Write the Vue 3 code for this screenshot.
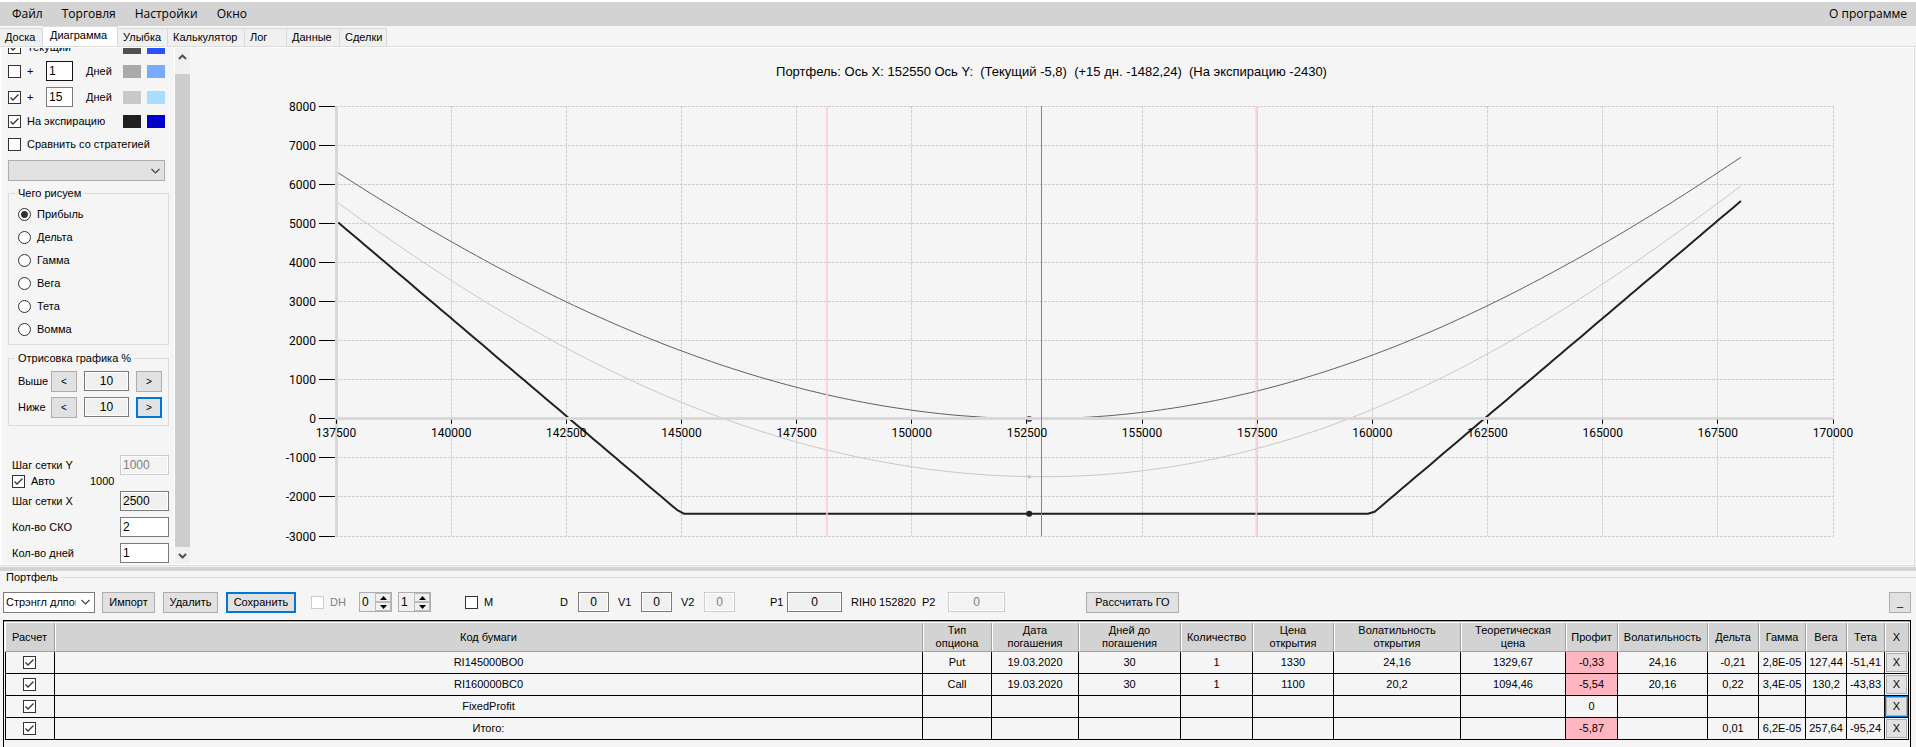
<script setup>
import { computed, onBeforeUnmount, onMounted, ref } from 'vue'

const menu = ['Файл', 'Торговля', 'Настройки', 'Окно']
const tabs = [
  { name: 'Доска', w: 43 },
  { name: 'Диаграмма', w: 75, active: true },
  { name: 'Улыбка', w: 50 },
  { name: 'Калькулятор', w: 77 },
  { name: 'Лог', w: 42 },
  { name: 'Данные', w: 53 },
  { name: 'Сделки', w: 47 }
]
const metrics = ['Прибыль', 'Дельта', 'Гамма', 'Вега', 'Тета', 'Вомма']
const metric = ref('Прибыль')

const columns = [
  { t: 'Расчет', w: 50 },
  { t: 'Код бумаги' },
  { t: 'Тип опциона', w: 69 },
  { t: 'Дата погашения', w: 87 },
  { t: 'Дней до погашения', w: 102 },
  { t: 'Количество', w: 72 },
  { t: 'Цена открытия', w: 81 },
  { t: 'Волатильность открытия', w: 127 },
  { t: 'Теоретическая цена', w: 105 },
  { t: 'Профит', w: 52 },
  { t: 'Волатильность', w: 90 },
  { t: 'Дельта', w: 51 },
  { t: 'Гамма', w: 47 },
  { t: 'Вега', w: 41 },
  { t: 'Тета', w: 38 },
  { t: 'X', w: 24 }
]
const rows = [
  ['RI145000BO0', 'Put', '19.03.2020', '30', '1', '1330', '24,16', '1329,67', '-0,33', '24,16', '-0,21', '2,8E-05', '127,44', '-51,41'],
  ['RI160000BC0', 'Call', '19.03.2020', '30', '1', '1100', '20,2', '1094,46', '-5,54', '20,16', '0,22', '3,4E-05', '130,2', '-43,83'],
  ['FixedProfit', '', '', '', '', '', '', '', '0', '', '', '', '', ''],
  ['Итого:', '', '', '', '', '', '', '', '-5,87', '', '0,01', '6,2E-05', '257,64', '-95,24']
]

/* Chart geometry follows the size of its container */
const holder = ref(null)
const size = ref({ w: 1720, h: 500 })
let observer
function measure() {
  size.value = { w: holder.value.clientWidth, h: holder.value.clientHeight }
}
onMounted(() => {
  measure()
  observer = new ResizeObserver(measure)
  observer.observe(holder.value)
})
onBeforeUnmount(() => observer.disconnect())

const X0 = 137500, X1 = 170000, Y0 = -3000, Y1 = 8000
const plot = computed(() => ({ l: 146, r: size.value.w - 80, t: 58, b: size.value.h - 28 }))
const px = v => plot.value.l + ((v - X0) / (X1 - X0)) * (plot.value.r - plot.value.l)
const py = v => plot.value.b - ((v - Y0) / (Y1 - Y0)) * (plot.value.b - plot.value.t)
const snap = v => Math.floor(v) + 0.5
const xTicks = Array.from({ length: 14 }, (_, i) => X0 + i * 2500)
const yTicks = Array.from({ length: 12 }, (_, i) => Y0 + i * 1000)

/* Strangle value by Black-Scholes: long put 145000 and long call 160000 */
function cdf(x) {
  const t = 1 / (1 + 0.2316419 * Math.abs(x))
  const d = 0.3989423 * Math.exp((-x * x) / 2)
  const p = d * t * (0.3193815 + t * (-0.3565638 + t * (1.781478 + t * (-1.821256 + t * 1.330274))))
  return x > 0 ? 1 - p : p
}
function option(s, k, vol, days, call) {
  if (days === 0) return Math.max(call ? s - k : k - s, 0)
  const sd = vol * Math.sqrt(days / 365)
  const d1 = Math.log(s / k) / sd + sd / 2
  const c = s * cdf(d1) - k * cdf(d1 - sd)
  return call ? c : c - s + k
}
const profit = (s, days) => option(s, 145000, 0.2416, days, false) + option(s, 160000, 0.2016, days, true) - 2430
function curve(days) {
  const pts = []
  for (let s = 137550; s <= 168000; s += 150) pts.push(`${px(s).toFixed(1)},${py(profit(s, days)).toFixed(1)}`)
  return pts.join(' ')
}
const now = computed(() => curve(30))
const later = computed(() => curve(15))
const expiry = computed(() => curve(0))
</script>

<template>
  <div class="app">
    <nav class="menu">
      <button v-for="m in menu" :key="m" type="button">{{ m }}</button>
      <button type="button" class="about">О программе</button>
    </nav>

    <div class="tabs" role="tablist">
      <button v-for="t in tabs" :key="t.name" type="button" role="tab" :aria-selected="!!t.active" :class="{ active: t.active }" :style="{ width: t.w + 'px' }">{{ t.name }}</button>
    </div>

    <main class="page">
      <aside class="side">
        <div class="series">
          <input id="s-now" type="checkbox" checked><label for="s-now" class="wide">Текущий</label>
          <button type="button" class="sw c1" aria-label="Цвет"></button><button type="button" class="sw c2" aria-label="Цвет"></button>
        </div>
        <div class="series tall">
          <input id="s-1" type="checkbox"><label for="s-1">+</label>
          <input id="d-1" type="text" value="1" class="field dark"><label for="d-1">Дней</label>
          <button type="button" class="sw c3" aria-label="Цвет"></button><button type="button" class="sw c4" aria-label="Цвет"></button>
        </div>
        <div class="series tall">
          <input id="s-15" type="checkbox" checked><label for="s-15">+</label>
          <input id="d-15" type="text" value="15" class="field"><label for="d-15">Дней</label>
          <button type="button" class="sw c5" aria-label="Цвет"></button><button type="button" class="sw c6" aria-label="Цвет"></button>
        </div>
        <div class="series">
          <input id="s-exp" type="checkbox" checked><label for="s-exp" class="wide">На экспирацию</label>
          <button type="button" class="sw c7" aria-label="Цвет"></button><button type="button" class="sw c8" aria-label="Цвет"></button>
        </div>
        <div class="series">
          <input id="s-cmp" type="checkbox"><label for="s-cmp" class="full">Сравнить со стратегией</label>
        </div>
        <select class="strategy" aria-label="Стратегия"><option></option></select>

        <fieldset class="group kinds">
          <legend>Чего рисуем</legend>
          <label v-for="m in metrics" :key="m"><input v-model="metric" type="radio" name="metric" :value="m">{{ m }}</label>
        </fieldset>

        <fieldset class="group range">
          <legend>Отрисовка графика %</legend>
          <div><label for="up">Выше</label><button type="button" class="btn">&lt;</button><input id="up" type="text" value="10" class="field flat mid"><button type="button" class="btn">&gt;</button></div>
          <div><label for="dn">Ниже</label><button type="button" class="btn">&lt;</button><input id="dn" type="text" value="10" class="field flat mid"><button type="button" class="btn focus">&gt;</button></div>
        </fieldset>

        <div class="steps">
          <label for="gy">Шаг сетки Y</label><input id="gy" type="text" value="1000" class="field flat" disabled>
          <div class="auto"><input id="auto" type="checkbox" checked><label for="auto">Авто</label><span>1000</span></div>
          <label for="gx">Шаг сетки X</label><input id="gx" type="text" value="2500" class="field flat">
          <label for="sko">Кол-во СКО</label><input id="sko" type="text" value="2" class="field">
          <label for="days">Кол-во дней</label><input id="days" type="text" value="1" class="field">
        </div>
      </aside>
      <div class="scroll">
        <button type="button" aria-label="Вверх"><svg width="9" height="6" viewBox="0 0 9 6"><path d="M1 5 4.500 1.500 8 5" /></svg></button>
        <i></i>
        <button type="button" aria-label="Вниз"><svg width="9" height="6" viewBox="0 0 9 6"><path d="M1 1 4.500 4.500 8 1" /></svg></button>
      </div>

      <section class="chart">
        <h1>Портфель: Ось X: 152550 Ось Y:&nbsp; (Текущий -5,8)&nbsp; (+15 дн. -1482,24)&nbsp; (На экспирацию -2430)</h1>
        <div ref="holder" class="holder">
          <svg :width="size.w" :height="size.h">
            <g class="grid">
              <line v-for="v in yTicks" :key="'h' + v" :x1="plot.l" :x2="plot.r" :y1="snap(py(v))" :y2="snap(py(v))" />
              <line v-for="v in xTicks" :key="'v' + v" :x1="snap(px(v))" :x2="snap(px(v))" :y1="plot.t" :y2="plot.b" />
            </g>
            <polyline :points="now" class="now" />
            <polyline :points="later" class="later" />
            <polyline :points="expiry" class="expiry" />
            <circle :cx="px(152550)" :cy="py(-5)" r="3" fill="#505050" />
            <circle :cx="px(152550)" :cy="py(-1482)" r="2" fill="#c8c8c8" />
            <circle :cx="px(152550)" :cy="py(-2430)" r="3" fill="#202020" />
            <g class="axis">
              <line :x1="snap(px(X0))" :x2="snap(px(X0))" :y1="plot.t" :y2="plot.b" />
              <line :x1="plot.l" :x2="plot.r" :y1="snap(py(0))" :y2="snap(py(0))" />
            </g>
            <g class="tick">
              <line v-for="v in yTicks" :key="'ty' + v" :x1="plot.l - 17" :x2="plot.l - 1" :y1="snap(py(v))" :y2="snap(py(v))" />
              <line v-for="v in xTicks" :key="'tx' + v" :x1="snap(px(v))" :x2="snap(px(v))" :y1="py(0) + 1" :y2="py(0) + 5" />
            </g>
            <line class="sigma" :x1="px(148160)" :x2="px(148160)" :y1="plot.t" :y2="plot.b" />
            <line class="sigma" :x1="px(157480)" :x2="px(157480)" :y1="plot.t" :y2="plot.b" />
            <line class="spot" :x1="snap(px(152820))" :x2="snap(px(152820))" :y1="plot.t" :y2="plot.b" />
            <text v-for="v in yTicks" :key="'ly' + v" :x="plot.l - 20" :y="snap(py(v)) + 4" text-anchor="end">{{ v }}</text>
            <text v-for="v in xTicks" :key="'lx' + v" :x="px(v)" :y="py(0) + 18" text-anchor="middle">{{ v }}</text>
          </svg>
        </div>
      </section>
    </main>

    <section class="portfolio">
      <h2>Портфель</h2>
      <div class="tools">
        <select class="name" aria-label="Портфель"><option>Стрэнгл длпоката</option></select>
        <button type="button" class="btn w53">Импорт</button>
        <button type="button" class="btn w55">Удалить</button>
        <button type="button" class="btn focus w70">Сохранить</button>
        <span class="tick-box off"><input id="dh" type="checkbox" disabled><label for="dh">DH</label></span>
        <span v-for="n in [0, 1]" :key="n" class="spin">
          <input type="text" :value="n" :aria-label="'DH ' + n">
          <span>
            <button type="button" aria-label="Больше"><svg width="7" height="4"><path d="M0 4 3.500 0 7 4z" /></svg></button>
            <button type="button" aria-label="Меньше"><svg width="7" height="4"><path d="M0 0 3.500 4 7 0z" /></svg></button>
          </span>
        </span>
        <span class="tick-box"><input id="m" type="checkbox"><label for="m">M</label></span>
        <label for="d">D</label><input id="d" type="text" value="0" class="field flat mid w31">
        <label for="v1">V1</label><input id="v1" type="text" value="0" class="field flat mid w31">
        <label for="v2">V2</label><input id="v2" type="text" value="0" class="field flat mid w31" disabled>
        <label for="p1">P1</label><input id="p1" type="text" value="0" class="field flat mid w55">
        <span>RIH0 152820</span>
        <label for="p2">P2</label><input id="p2" type="text" value="0" class="field flat mid w57" disabled>
        <button type="button" class="btn w93">Рассчитать ГО</button>
        <button type="button" class="btn fold">_</button>
      </div>

      <div class="frame">
        <table>
          <colgroup><col v-for="(c, i) in columns" :key="i" :style="c.w ? { width: c.w + 'px' } : null"></colgroup>
          <thead>
            <tr><th v-for="(c, i) in columns" :key="i" scope="col">{{ c.t }}</th></tr>
          </thead>
          <tbody>
            <tr v-for="(r, i) in rows" :key="i">
              <td><input type="checkbox" checked :aria-label="r[0]"></td>
              <td v-for="(c, j) in r" :key="j" :class="{ loss: j === 8 && c[0] === '-' }">{{ c }}</td>
              <td class="del" :class="{ cur: i === 2 }"><button type="button">X</button></td>
            </tr>
          </tbody>
        </table>
      </div>
    </section>
  </div>
</template>

<style>
html, body { margin: 0; background: #f5f5f5; }
</style>

<style scoped>
.app {
  min-height: 100vh;
  display: flex;
  flex-direction: column;
  background: #f5f5f5;
  color: #000;
  font: 11px/13px "Liberation Sans", Arial, sans-serif;
}
.app *, .app *::before { box-sizing: border-box; }
button, input, select { font: inherit; color: inherit; margin: 0; padding: 0; border-radius: 0; }
label { white-space: nowrap; }

.menu { display: flex; gap: 19px; padding: 0 9px 0 12px; height: 26px; border-top: 2px solid #fff; background: #d3d3d3; font: 12px/16px "Open Sans", sans-serif; }
.menu button { border: 0; background: none; }
.menu .about { margin-left: auto; }

.tabs { display: flex; align-items: flex-end; height: 20px; padding-top: 1px; }
.tabs button { height: 18px; border: 1px solid #d9d9d9; border-width: 1px 1px 0 0; background: #f0f0f0; padding-left: 5px; text-align: left; }
.tabs .active { height: 20px; background: #fff; border-color: #dcdcdc; padding: 0 0 3px 7px; }

.page { flex: 1; display: flex; min-height: 0; border: 1px solid #dcdcdc; border-left: 0; margin-right: 1px; box-shadow: inset 0 0 0 1px #fff; padding: 1px; background: #f5f5f5; }
.side { width: 174px; height: 515px; overflow: hidden; padding: 0 5px 0 7px; border-right: 1px solid #fff; }

input[type="checkbox"], input[type="radio"] { appearance: none; flex: none; width: 13px; height: 13px; border: 1px solid #333; background: #fff; }
input[type="checkbox"]:checked { background: #fff url("data:image/svg+xml,%3Csvg xmlns='http://www.w3.org/2000/svg' viewBox='0 0 11 11'%3E%3Cpath d='M1.500 5.500 4 8 9.500 2.500' fill='none' stroke='%23333' stroke-width='1.300'/%3E%3C/svg%3E"); }
input[type="checkbox"]:disabled { border-color: #ccc; background: #fff; }
input[type="radio"] { border-radius: 50%; }
input[type="radio"]:checked { background: radial-gradient(#333 0 3px, #fff 4px); }
.field { height: 20px; border: 1px solid #7a7a7a; background: #fff; padding: 0 2px; min-width: 0; font-size: 12px; outline: none; }
.field.dark { border-color: #111; }
.field.flat { background: #f0f0f0; box-shadow: inset 0 0 0 1px #fff; }
.field.mid { text-align: center; }
.field:disabled { border-color: #ccc; color: #808080; background: #f3f3f3; }
.btn { height: 21px; border: 1px solid #adadad; background: #e1e1e1; white-space: nowrap; }
.btn.focus { border: 2px solid #0078d7; }
select { appearance: none; border: 1px solid #7a7a7a; background: #fff url("data:image/svg+xml,%3Csvg xmlns='http://www.w3.org/2000/svg' width='9' height='6'%3E%3Cpath d='M.5 1 4.500 5 8.500 1' fill='none' stroke='%23444' stroke-width='1.200'/%3E%3C/svg%3E") no-repeat right 4px center; }

.series { display: grid; grid-template-columns: 19px 19px 40px 37px 24px 18px; align-items: center; height: 23px; }
.series:first-child { margin-top: -11px; height: 21px; }
.series.tall { height: 26px; }
.series .wide { grid-column: 2 / 5; }
.series .full { grid-column: 2 / 7; }
.series .field { width: 27px; }
.sw { width: 18px; height: 13px; border: 0; }
.c1 { background: #505050; } .c2 { background: #2850ff; }
.c3 { background: #aaa; } .c4 { background: #78aaff; }
.c5 { background: #c8c8c8; } .c6 { background: #aadcff; }
.c7 { background: #202020; } .c8 { background: #0000c8; }
.strategy { display: block; width: 157px; height: 21px; margin-top: 4px; border-color: #adadad; background-color: #e1e1e1; }

.group { margin: 0; padding: 0 9px; border: 1px solid #dcdcdc; min-width: 0; }
.group legend { margin-left: -3px; padding: 0 3px; line-height: 13px; }
.kinds { margin-top: 6px; height: 158px; padding-top: 3px; }
.kinds label { display: flex; align-items: center; gap: 6px; height: 23px; }
.range { margin-top: 7px; height: 74px; padding-top: 3px; }
.range div { display: grid; grid-template-columns: 33px 33px 52px 26px; align-items: center; height: 26px; }
.range .btn { width: 26px; font-size: 10px; }
.range .field { width: 45px; }

.steps { display: grid; grid-template-columns: 108px 49px; align-items: center; row-gap: 6px; padding-left: 4px; margin-top: 29px; }
.auto { grid-column: 1 / 3; display: flex; align-items: center; height: 13px; margin: -6px 0 -3px; }
.auto label { width: 59px; margin-left: 6px; }
.auto span { font-size: 11px; }

.scroll { width: 15px; display: flex; flex-direction: column; background: #f0f0f0; }
.scroll button { height: 26px; border: 0; background: none; display: flex; justify-content: center; padding-top: 6px; }
.scroll button:last-child { height: 17px; }
.scroll i { flex: 1; background: #cdcdcd; }
.scroll path { fill: none; stroke: #505050; stroke-width: 2; }

.chart { flex: 1; min-width: 0; position: relative; }
.chart h1 { position: absolute; left: 0; right: 0; top: 15px; margin: 0; text-align: center; font: 13px/18px "Liberation Sans", Arial, sans-serif; }
.holder { height: 100%; overflow: hidden; }
.holder svg { display: block; }
.grid line { stroke: #d0d0d0; stroke-dasharray: 3 1; }
.axis line { stroke: #d8d8d8; stroke-width: 3; }
.tick line { stroke: #000; }
.sigma { stroke: #ffc8d2; stroke-width: 2; stroke-opacity: 0.8; }
.spot { stroke: #778899; }
polyline { fill: none; stroke-linejoin: round; }
.now { stroke: #606060; }
.later { stroke: #c8c8c8; }
.expiry { stroke: #202020; stroke-width: 2; }
.chart text { font: 12px Roboto, sans-serif; }

.portfolio { margin-top: 1px; border-top: 4px solid #d3d3d3; padding: 0 5px 0 3px; }
h2 { display: flex; align-items: center; gap: 3px; margin: 0 -5px 0 0; padding-left: 3px; font: 11px/13px "Liberation Sans", Arial, sans-serif; }
h2::after { content: ""; flex: 1; border-top: 1px solid #dcdcdc; }
.tools {
  display: grid;
  grid-template-columns: 99px 61px 63px 85px 48px 39px 67px 95px 18px 40px 23px 40px 23px 66px 17px 64px 71px 26px 138px 1fr 22px;
  align-items: center;
  height: 36px;
}
.tools > * { white-space: nowrap; }
.tools .name { width: 92px; height: 21px; padding: 0 18px 0 2px; overflow: hidden; text-overflow: clip; }
.w31 { width: 31px; } .w53 { width: 53px; } .w55 { width: 55px; } .w57 { width: 57px; } .w70 { width: 70px; } .w93 { width: 93px; }
.fold { width: 22px; grid-column: 21; }
.tick-box { display: flex; align-items: center; gap: 6px; }
.tick-box.off { color: #808080; }
.spin { display: flex; width: 33px; height: 20px; border: 1px solid #adadad; background: #f0f0f0; }
.spin input { width: 15px; border: 0; background: none; padding-left: 2px; font-size: 12px; }
.spin > span { flex: 1; display: flex; flex-direction: column; }
.spin button { flex: 1; min-height: 0; display: flex; align-items: center; justify-content: center; border: 1px solid #bbb; background: #f0f0f0; }

.frame { border: 1px solid #000; border-bottom: 0; padding: 2px 1px 7px; box-shadow: inset 0 1px #a0a0a0, inset 0 2px #fff; }
table { width: 100%; table-layout: fixed; border-collapse: separate; border-spacing: 0; }
th { height: 29px; padding: 0 3px; background: #d3d3d3; border: 0 solid #a0a0a0; border-width: 0 1px 1px 0; box-shadow: inset 1px 0 #fff; font-weight: 400; vertical-align: middle; }
td { height: 22px; padding: 0; text-align: center; white-space: nowrap; border: 0 solid #000; border-width: 0 1px 1px 0; }
td:first-child { border-left-width: 1px; padding-right: 2px; }
td input { display: block; margin: 0 auto; }
.loss { background: #ffb6c1; }
.del { padding: 1px; }
.del button { display: block; width: 100%; height: 19px; border: 1px solid #adadad; background: #e1e1e1; }
.del.cur { box-shadow: inset 0 0 0 1px #0078d7; }
</style>
